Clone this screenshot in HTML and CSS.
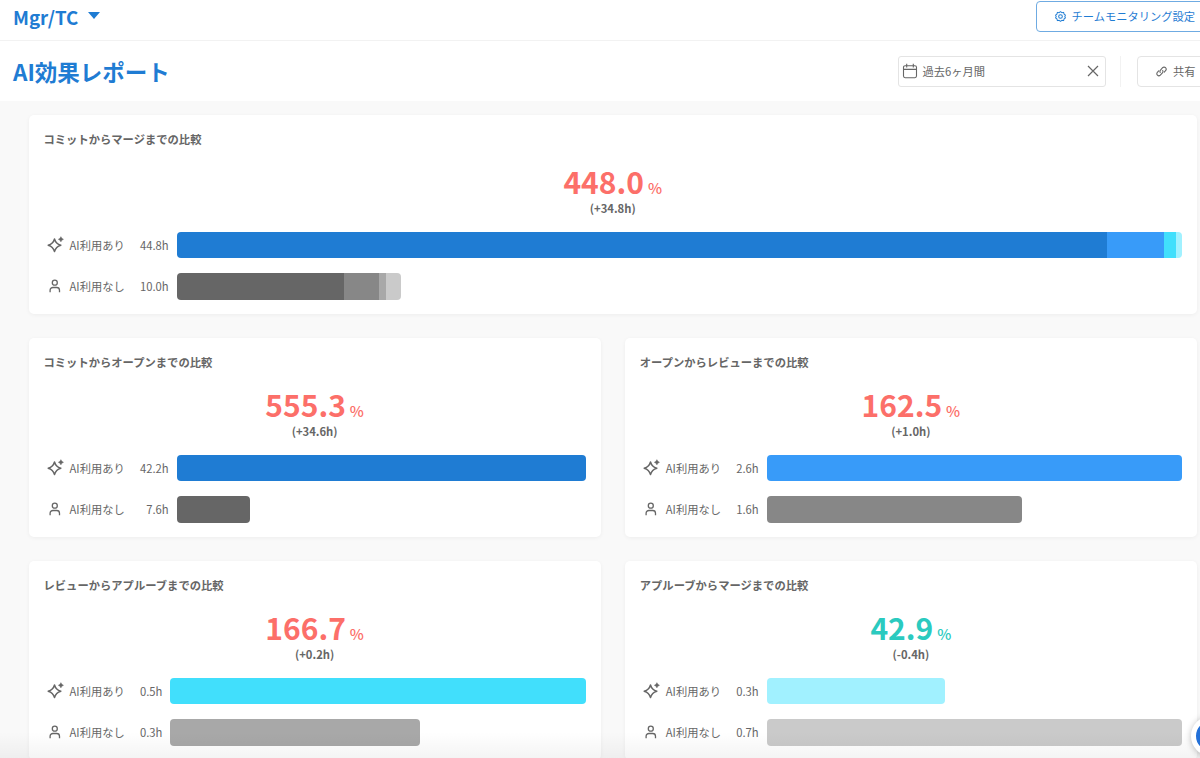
FILE: index.html
```html
<!DOCTYPE html>
<html lang="ja">
<head>
  <meta charset="UTF-8" />
  <meta name="viewport" content="width=device-width, initial-scale=1.0" />
  <title>AI効果レポート</title>
  <link rel="stylesheet" href="styles.css">
</head>
<body>
  <svg class="sprite" aria-hidden="true">
    <symbol id="sparkle" viewBox="0 0 18 18">
      <path d="M7.5 3 Q8.9 7.9 13.8 9.3 Q8.9 10.7 7.5 15.6 Q6.1 10.7 1.2 9.3 Q6.1 7.9 7.5 3 Z" fill="none" stroke="currentColor" stroke-width="1.5" stroke-linejoin="round"/>
      <path d="M13.9 .6 L14.9 2.3 L16.6 3.3 L14.9 4.3 L13.9 6 L12.9 4.3 L11.2 3.3 L12.9 2.3 Z" fill="currentColor" stroke="currentColor" stroke-width=".3"/>
    </symbol>
    <symbol id="person" viewBox="0 0 18 18">
      <circle cx="7.8" cy="5.7" r="2.5" fill="none" stroke="currentColor" stroke-width="1.3"/>
      <path d="M3.1 15.2 V13.3 a2.8 2.8 0 0 1 2.8-2.8 h3.8 a2.8 2.8 0 0 1 2.8 2.8 V15.2" fill="none" stroke="currentColor" stroke-width="1.3"/>
    </symbol>
  </svg>

  <header class="topbar">
    <div class="team">Mgr/TC <span class="caret"></span></div>
    <button class="btn btn-primary">
      <svg class="icon-gear" viewBox="0 0 12 12" fill="none" stroke="currentColor">
        <path d="M6 .7 L7.5 1.8 L9.4 1.5 L9.9 3.4 L11.4 4.5 L10.7 6 L11.4 7.5 L9.9 8.6 L9.4 10.5 L7.5 10.2 L6 11.3 L4.5 10.2 L2.6 10.5 L2.1 8.6 L.6 7.5 L1.3 6 L.6 4.5 L2.1 3.4 L2.6 1.5 L4.5 1.8 Z" stroke-linejoin="round"/>
        <circle cx="6" cy="6" r="2"/>
      </svg>
      チームモニタリング設定
    </button>
  </header>

  <section class="titlebar">
    <h1>AI効果レポート</h1>
    <div class="period">
      <svg class="icon-calendar" viewBox="0 0 16 16" fill="none" stroke="currentColor">
        <rect x="1.5" y="2.7" width="13" height="12" rx="1.6"/>
        <path d="M1.5 6.4 H14.5 M4.7 .8 V4.4 M11.3 .8 V4.4"/>
      </svg>
      <span>過去6ヶ月間</span>
      <svg class="icon-close" viewBox="0 0 12 12" fill="none" stroke="currentColor"><path d="M1 1 L11 11 M11 1 L1 11"/></svg>
    </div>
    <div class="divider"></div>
    <button class="btn btn-share">
      <svg class="icon-link" viewBox="0 0 12 12" fill="none" stroke="currentColor" stroke-linecap="round">
        <path d="M4.6 7 A2.3 2.3 0 0 1 4.9 4.4 L7.2 1.9 A2.2 2.2 0 0 1 10.4 5 L9 6.6"/>
        <path d="M7.3 4.9 A2.3 2.3 0 0 1 7 7.5 L4.7 10 A2.2 2.2 0 0 1 1.5 6.9 L2.9 5.3"/>
      </svg>
      共有
    </button>
  </section>

  <main class="report">
    <section class="card card-wide">
      <h2>コミットからマージまでの比較</h2>
      <div class="score worse"><b>448.0</b><span>%</span></div>
      <p class="diff">(+34.8h)</p>
      <div class="rows">
        <svg class="icon"><use href="#sparkle"/></svg>
        <span class="label">AI利用あり</span>
        <span class="value">44.8h</span>
        <div class="track"><div class="bar" style="width:100%">
          <i class="ai-commit" style="flex-grow:929.5"></i><i class="ai-open" style="flex-grow:57.5"></i><i class="ai-review" style="flex-grow:11.5"></i><i class="ai-approve" style="flex-grow:6"></i>
        </div></div>
        <svg class="icon"><use href="#person"/></svg>
        <span class="label">AI利用なし</span>
        <span class="value">10.0h</span>
        <div class="track"><div class="bar" style="width:22.35%">
          <i class="no-commit" style="flex-grow:167"></i><i class="no-open" style="flex-grow:35"></i><i class="no-review" style="flex-grow:7"></i><i class="no-approve" style="flex-grow:15.5"></i>
        </div></div>
      </div>
    </section>

    <section class="card">
      <h2>コミットからオープンまでの比較</h2>
      <div class="score worse"><b>555.3</b><span>%</span></div>
      <p class="diff">(+34.6h)</p>
      <div class="rows">
        <svg class="icon"><use href="#sparkle"/></svg>
        <span class="label">AI利用あり</span>
        <span class="value">42.2h</span>
        <div class="track"><div class="bar" style="width:100%"><i class="ai-commit"></i></div></div>
        <svg class="icon"><use href="#person"/></svg>
        <span class="label">AI利用なし</span>
        <span class="value">7.6h</span>
        <div class="track"><div class="bar" style="width:18%"><i class="no-commit"></i></div></div>
      </div>
    </section>

    <section class="card">
      <h2>オープンからレビューまでの比較</h2>
      <div class="score worse"><b>162.5</b><span>%</span></div>
      <p class="diff">(+1.0h)</p>
      <div class="rows">
        <svg class="icon"><use href="#sparkle"/></svg>
        <span class="label">AI利用あり</span>
        <span class="value">2.6h</span>
        <div class="track"><div class="bar" style="width:100%"><i class="ai-open"></i></div></div>
        <svg class="icon"><use href="#person"/></svg>
        <span class="label">AI利用なし</span>
        <span class="value">1.6h</span>
        <div class="track"><div class="bar" style="width:61.5%"><i class="no-open"></i></div></div>
      </div>
    </section>

    <section class="card">
      <h2>レビューからアプルーブまでの比較</h2>
      <div class="score worse"><b>166.7</b><span>%</span></div>
      <p class="diff">(+0.2h)</p>
      <div class="rows">
        <svg class="icon"><use href="#sparkle"/></svg>
        <span class="label">AI利用あり</span>
        <span class="value">0.5h</span>
        <div class="track"><div class="bar" style="width:100%"><i class="ai-review"></i></div></div>
        <svg class="icon"><use href="#person"/></svg>
        <span class="label">AI利用なし</span>
        <span class="value">0.3h</span>
        <div class="track"><div class="bar" style="width:60%"><i class="no-review"></i></div></div>
      </div>
    </section>

    <section class="card">
      <h2>アプルーブからマージまでの比較</h2>
      <div class="score better"><b>42.9</b><span>%</span></div>
      <p class="diff">(-0.4h)</p>
      <div class="rows">
        <svg class="icon"><use href="#sparkle"/></svg>
        <span class="label">AI利用あり</span>
        <span class="value">0.3h</span>
        <div class="track"><div class="bar" style="width:42.9%"><i class="ai-approve"></i></div></div>
        <svg class="icon"><use href="#person"/></svg>
        <span class="label">AI利用なし</span>
        <span class="value">0.7h</span>
        <div class="track"><div class="bar" style="width:100%"><i class="no-approve"></i></div></div>
      </div>
    </section>
  </main>

  <div class="bottom-shade"></div>
  <div class="chat"></div>
</body>
</html>
```

FILE: styles.css
```css
* {
  margin: 0;
  padding: 0;
  box-sizing: border-box;
}
body {
  height: 758px;
  overflow: hidden;
  position: relative;
  font-family: 'Noto Sans CJK JP', 'Noto Sans', sans-serif;
  font-size: 11.25px;
  background: #f9f9f9;
  color: #666;
}
.sprite {
  display: none;
}
.topbar,
.titlebar {
  width: 1211px;
  display: flex;
  align-items: center;
  background: #fff;
  padding-left: 13px;
}
.topbar {
  height: 41px;
  justify-content: space-between;
  padding-bottom: 8px;
  border-bottom: 1px solid #f2f2f2;
}
.team {
  display: flex;
  align-items: center;
  gap: 10px;
  padding-top: 2px;
  font-size: 18.7px;
  line-height: 24px;
  font-weight: 700;
  color: #1f7cd3;
}
.caret {
  border: 6px solid transparent;
  border-top: 7px solid #1f7cd3;
  border-bottom: 0;
  margin-top: -3px;
}
.btn {
  display: flex;
  align-items: center;
  height: 31px;
  border: 1px solid #e4e4e4;
  border-radius: 4px;
  background: #fff;
  font-family: inherit;
  font-size: 11.25px;
  color: #666;
  white-space: nowrap;
}
.btn-primary {
  width: 175px;
  padding-left: 18px;
  gap: 5.5px;
  border-color: #6fabe2;
  color: #1f7cd3;
}
.icon-gear {
  width: 11px;
  height: 11px;
  stroke-width: 1.1;
}
.titlebar {
  height: 60px;
}
.titlebar h1 {
  flex: 1;
  font-size: 22.5px;
  line-height: 30px;
  font-weight: 700;
  color: #1f7cd3;
}
.period {
  display: flex;
  align-items: center;
  width: 208px;
  height: 31px;
  padding: 0 6px 0 3px;
  border: 1px solid #e4e4e4;
  border-radius: 3px;
}
.period span {
  flex: 1;
  margin-left: 4.5px;
}
.icon-calendar {
  width: 16px;
  height: 16px;
  stroke-width: 1.1;
}
.icon-close {
  width: 12px;
  height: 12px;
  stroke-width: 1.2;
}
.divider {
  width: 1px;
  height: 31px;
  margin: 0 16px 0 14px;
  background: #f2f2f2;
}
.btn-share {
  width: 74px;
  padding-left: 18px;
  gap: 6px;
}
.icon-link {
  width: 11px;
  height: 11px;
  stroke-width: 1.2;
}
.report {
  width: 1168.5px;
  margin: 14px 0 0 28.5px;
  display: grid;
  grid-template-columns: 1fr 1fr;
  gap: 24px;
}
.card {
  height: 199px;
  padding: 14px 15px 0;
  background: #fff;
  border-radius: 5px;
  box-shadow: 0 1px 4px rgba(0,0,0,0.05);
}
.card-wide {
  grid-column: 1 / 3;
}
.card h2 {
  font-size: 11.3px;
  line-height: 20px;
  font-weight: 700;
}
.score {
  display: flex;
  justify-content: center;
  align-items: baseline;
  gap: 4px;
  height: 37px;
  margin-top: 14px;
  line-height: 36px;
}
.score b {
  font-size: 30px;
}
.score span {
  font-size: 15px;
  font-weight: 500;
}
.worse {
  color: #fc6f69;
}
.better {
  color: #2bcabf;
}
.diff {
  line-height: 16px;
  font-weight: 700;
  text-align: center;
}
.rows {
  display: grid;
  grid-template-columns: 18px 55px auto 1fr;
  align-items: center;
  row-gap: 15px;
  margin-top: 16px;
  padding-left: 3px;
}
.icon {
  width: 18px;
  height: 18px;
}
.label {
  margin-left: 5px;
  white-space: nowrap;
}
.value {
  margin-left: 20.5px;
  text-align: right;
}
.track {
  margin-left: 8px;
}
.bar {
  display: flex;
  height: 26.3px;
  border-radius: 4px;
  overflow: hidden;
}
.bar i {
  flex: 1 1 0;
}
.ai-commit { background: #1f7cd3; }
.ai-open { background: #389bf9; }
.ai-review { background: #41dffc; }
.ai-approve { background: #a1f1ff; }
.no-commit { background: #666; }
.no-open { background: #878787; }
.no-review { background: #a8a8a8; }
.no-approve { background: #cacaca; }

.bottom-shade {
  position: absolute;
  left: 0;
  right: 0;
  bottom: 0;
  height: 26px;
  background: linear-gradient(rgba(0,0,0,0), rgba(0,0,0,0.045));
}
.chat {
  position: absolute;
  left: 1191px;
  top: 716px;
  width: 40px;
  height: 40px;
  border: 5px solid #fff;
  border-radius: 50%;
  background: #2370d8;
  box-shadow: 0 1px 6px rgba(0,0,0,0.25);
}
```
